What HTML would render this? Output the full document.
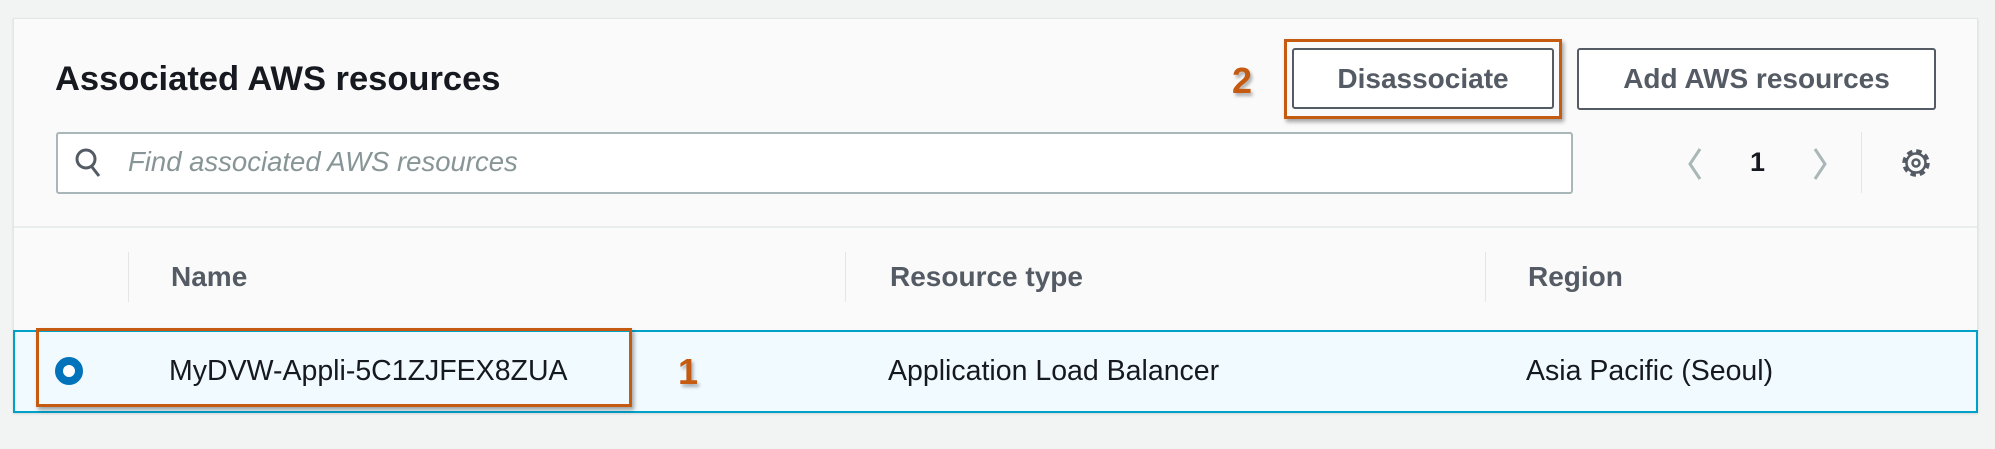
<!DOCTYPE html>
<html><head><meta charset="utf-8"><style>
body{margin:0;width:1995px;height:449px;background:#f2f3f3;font-family:"Liberation Sans",sans-serif;position:relative;overflow:hidden}
.a{position:absolute}
.card{left:13px;top:18px;width:1965px;height:395px;background:#fafafa;border:1px solid #e4e6e6;box-sizing:border-box;box-shadow:0 1px 2px rgba(0,0,0,.12)}
.t{font-weight:bold;color:#16191f}
.btn{background:#fff;border:2px solid #545b64;border-radius:3px;box-sizing:border-box;color:#545b64;font-weight:bold;font-size:28px;display:flex;align-items:center;justify-content:center}
.hd{font-weight:bold;color:#545b64;font-size:28px}
.sep{width:1px;background:#e4e6e6}
.cell{font-size:28.5px;color:#16191f}
.or{border:3px solid #c55a11;box-sizing:border-box;box-shadow:2px 3px 4px rgba(0,0,0,.35)}
.num{color:#c55a11;font-weight:bold;font-size:36px;text-shadow:2px 3px 3px rgba(0,0,0,.3)}
</style></head><body>
<div class="a card"></div>
<div class="a t" style="left:55px;top:60px;font-size:34.5px">Associated AWS resources</div>
<div class="a" style="left:56px;top:132px;width:1517px;height:62px;background:#fff;border:2px solid #aab7b8;border-radius:3px;box-sizing:border-box"></div>
<svg class="a" style="left:74px;top:146px" width="30" height="34" viewBox="0 0 30 34"><circle cx="12" cy="13" r="9" fill="none" stroke="#545b64" stroke-width="3"/><path d="M18 21 L25 30" stroke="#545b64" stroke-width="3"/></svg>
<div class="a" style="left:128px;top:146px;font-size:27.5px;font-style:italic;color:#879596">Find associated AWS resources</div>
<div class="a btn" style="left:1292px;top:48px;width:262px;height:61px">Disassociate</div>
<div class="a btn" style="left:1577px;top:48px;width:359px;height:62px">Add AWS resources</div>
<div class="a or" style="left:1284px;top:39px;width:278px;height:80px"></div>
<div class="a num" style="left:1232px;top:60px">2</div>
<svg class="a" style="left:1685px;top:146px" width="20" height="36"><path d="M15 3 L5 18 L15 33" fill="none" stroke="#aab7b8" stroke-width="3"/></svg>
<div class="a" style="left:1750px;top:147px;font-size:27px;color:#16191f;font-weight:bold">1</div>
<svg class="a" style="left:1810px;top:146px" width="20" height="36"><path d="M5 3 L15 18 L5 33" fill="none" stroke="#aab7b8" stroke-width="3"/></svg>
<div class="a sep" style="left:1861px;top:132px;height:61px"></div>
<svg class="a" style="left:1898px;top:145px" width="36" height="36" viewBox="0 0 36 36"><circle cx="18" cy="18" r="12" fill="none" stroke="#545b64" stroke-width="3.5" stroke-dasharray="5.5 3.9"/><circle cx="18" cy="18" r="9.5" fill="none" stroke="#545b64" stroke-width="2.5"/><circle cx="18" cy="18" r="3.5" fill="none" stroke="#545b64" stroke-width="2.5"/></svg>
<div class="a" style="left:14px;top:226px;width:1963px;height:2px;background:#eaeded"></div>
<div class="a sep" style="left:128px;top:252px;height:50px"></div>
<div class="a sep" style="left:845px;top:252px;height:50px"></div>
<div class="a sep" style="left:1485px;top:252px;height:50px"></div>
<div class="a hd" style="left:171px;top:261px">Name</div>
<div class="a hd" style="left:890px;top:261px">Resource type</div>
<div class="a hd" style="left:1528px;top:261px">Region</div>
<div class="a" style="left:13px;top:330px;width:1965px;height:83px;background:#f1faff;border:2px solid #00a1c9;box-sizing:border-box"></div>
<div class="a" style="left:55px;top:357px;width:28px;height:28px;border-radius:50%;border:8px solid #0073bb;box-sizing:border-box;background:#fff"></div>
<div class="a cell" style="left:169px;top:355px">MyDVW-Appli-5C1ZJFEX8ZUA</div>
<div class="a cell" style="left:888px;top:355px">Application Load Balancer</div>
<div class="a cell" style="left:1526px;top:355px">Asia Pacific (Seoul)</div>
<div class="a or" style="left:36px;top:328px;width:596px;height:79px"></div>
<div class="a num" style="left:678px;top:351px">1</div>
</body></html>
